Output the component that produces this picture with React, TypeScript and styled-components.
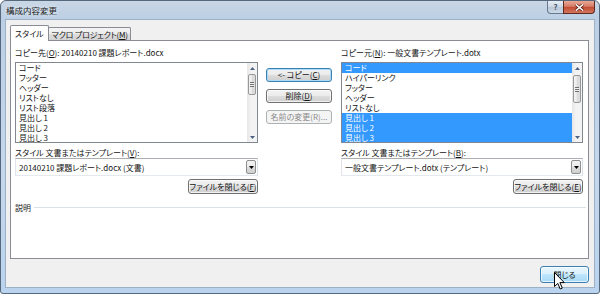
import React from "react";
import styled, { createGlobalStyle, css } from "styled-components";

const GlobalStyle = createGlobalStyle`
  html, body {
    margin: 0;
    padding: 0;
    background: #ffffff;
  }
  #root {
    width: 600px;
    height: 294px;
  }
`;

const Window = styled.div`
  width: 600px;
  height: 294px;
  box-sizing: border-box;
  border: 1px solid #56687c;
  border-radius: 6px 6px 3px 3px;
  background: linear-gradient(
    to bottom,
    #c9d6e5 0px,
    #bccfe4 19px,
    #c4d7ec 60%,
    #bad3ee 100%
  );
  display: flex;
  flex-direction: column;
  overflow: hidden;
  font-family: "Noto Sans CJK JP", "Noto Sans", sans-serif;
  font-feature-settings: "palt";
  font-size: 8px;
  color: #141414;
`;

const TitleBar = styled.div`
  height: 18px;
  display: flex;
  justify-content: space-between;
  align-items: flex-start;
`;

const Title = styled.div`
  padding: 4px 0 0 5px;
  line-height: 10px;
  font-size: 8.5px;
  color: #1a1a1a;
  text-shadow: 0 0 4px rgba(255, 255, 255, 0.9);
`;

const CaptionButtons = styled.div`
  display: flex;
  margin-right: 4px;
`;

const HelpButton = styled.div`
  width: 17px;
  height: 13px;
  box-sizing: border-box;
  border: 1px solid #67798e;
  border-top: none;
  border-radius: 0 0 0 4px;
  background: linear-gradient(
    to bottom,
    #e6edf5 0%,
    #d0dae6 45%,
    #b9c7d7 50%,
    #cbd8e6 100%
  );
  display: flex;
  align-items: center;
  justify-content: center;
  font-size: 8px;
  font-weight: bold;
  color: #4a5a6d;
  line-height: 1;
`;

const CloseButton = styled.div`
  width: 32px;
  height: 13px;
  box-sizing: border-box;
  margin-left: -1px;
  border: 1px solid #5d2a22;
  border-top: none;
  border-radius: 0 0 4px 0;
  background: linear-gradient(
    to bottom,
    #e9a896 0%,
    #d57c66 45%,
    #c24a31 50%,
    #d2765e 100%
  );
  display: flex;
  align-items: center;
  justify-content: center;
`;

const Client = styled.div`
  flex: 1;
  margin: 0 4px 5px 4px;
  border: 1px solid #9db1c6;
  background: #f0f0f0;
  padding: 5px 5px 0 4px;
  display: flex;
  flex-direction: column;
`;

const TabStrip = styled.div`
  display: flex;
  align-items: flex-end;
  height: 15px;
  position: relative;
  z-index: 1;
`;

const Tab = styled.div<{ $active?: boolean }>`
  box-sizing: border-box;
  border: 1px solid #898c95;
  border-bottom: none;
  border-radius: 2px 2px 0 0;
  white-space: nowrap;
  line-height: 11px;
  ${({ $active }) =>
    $active
      ? css`
          height: 16px;
          margin-bottom: -1px;
          padding: 2px 4px 0 4px;
          background: #ffffff;
        `
      : css`
          height: 13px;
          margin-left: -1px;
          padding: 1px 2px 0 3px;
          letter-spacing: -0.2px;
          background: linear-gradient(
            to bottom,
            #f4f4f4 0%,
            #ebebeb 50%,
            #dddddd 51%,
            #d3d3d3 100%
          );
        `}
`;

const Panel = styled.div`
  height: 219px;
  box-sizing: border-box;
  border: 1px solid #898c95;
  background: #ffffff;
  padding: 6px 5px 0 4px;
`;

const Columns = styled.div`
  display: grid;
  grid-template-columns: 243px 67px 242px;
  column-gap: 8px;
`;

const Side = styled.div`
  display: flex;
  flex-direction: column;
`;

const FieldLabel = styled.div<{ $gap?: number }>`
  height: 11px;
  line-height: 11px;
  white-space: nowrap;
  margin-top: ${({ $gap }) => $gap ?? 0}px;
`;

const Key = styled.span`
  text-decoration: underline;
`;

const ListBox = styled.div`
  margin-top: 4px;
  height: 81px;
  box-sizing: border-box;
  border: 1px solid #828790;
  background: #ffffff;
  display: flex;
`;

const ListItems = styled.div`
  flex: 1;
  overflow: hidden;
`;

const ListRow = styled.div<{ $selected?: boolean }>`
  height: 10px;
  line-height: 10px;
  padding-left: 3px;
  white-space: nowrap;
  ${({ $selected }) =>
    $selected &&
    css`
      background: #3399ff;
      color: #ffffff;
    `}
`;

const ScrollBar = styled.div`
  width: 10px;
  display: flex;
  flex-direction: column;
  background: linear-gradient(to right, #e6e6e6, #f3f3f3 40%, #f3f3f3);
`;

const ArrowButton = styled.div`
  height: 10px;
  display: flex;
  align-items: center;
  justify-content: center;
`;

const Track = styled.div`
  flex: 1;
`;

const Thumb = styled.div<{ $offset: number; $size: number }>`
  margin: ${({ $offset }) => $offset}px 1px 0 1px;
  height: ${({ $size }) => $size}px;
  box-sizing: border-box;
  border: 1px solid #979797;
  border-radius: 2px;
  background: linear-gradient(
    to right,
    #f4f4f4 0%,
    #e8e8e8 50%,
    #d9d9d9 51%,
    #dedede 100%
  );
  display: flex;
  align-items: center;
  justify-content: center;
`;

const Grip = styled.div`
  width: 4px;
  height: 5px;
  background: repeating-linear-gradient(
    to bottom,
    #6f6f6f 0px,
    #6f6f6f 1px,
    #f2f2f2 1px,
    #f2f2f2 2px
  );
`;

const Middle = styled.div`
  padding-top: 21px;
  display: flex;
  flex-direction: column;
  gap: 7px;
`;

type ButtonKind = "normal" | "focus" | "disabled" | "hot";

const Button = styled.div<{ $kind?: ButtonKind; $w: number; $h: number }>`
  width: ${({ $w }) => $w}px;
  height: ${({ $h }) => $h}px;
  box-sizing: border-box;
  border: 1px solid #707070;
  border-radius: 3px;
  display: flex;
  align-items: center;
  justify-content: center;
  white-space: nowrap;
  line-height: 1;
  box-shadow: inset 0 0 0 1px rgba(255, 255, 255, 0.7);
  background: linear-gradient(
    to bottom,
    #f2f2f2 0%,
    #ebebeb 49%,
    #dddddd 50%,
    #cfcfcf 100%
  );
  ${({ $kind }) =>
    $kind === "focus" &&
    css`
      border-color: #3c7fb1;
      box-shadow: inset 0 0 0 1px #a9dcf6;
    `}
  ${({ $kind }) =>
    $kind === "disabled" &&
    css`
      border-color: #adb2b5;
      background: #f4f4f4;
      color: #8a8a8a;
      box-shadow: none;
    `}
  ${({ $kind }) =>
    $kind === "hot" &&
    css`
      border-color: #3c7fb1;
      background: linear-gradient(
        to bottom,
        #eaf6fd 0%,
        #d9f0fc 49%,
        #bee6fd 50%,
        #a7d9f5 100%
      );
    `}
`;

const ComboBox = styled.div`
  height: 18px;
  box-sizing: border-box;
  border: 1px solid #abadb3;
  border-color: #abadb3 #dbdfe6 #e3e9ef #e2e3ea;
  background: #ffffff;
  display: flex;
  align-items: center;
  padding-left: 3px;
`;

const ComboText = styled.div`
  flex: 1;
  white-space: nowrap;
  overflow: hidden;
`;

const DropButton = styled.div`
  width: 10px;
  height: 14px;
  margin-right: 1px;
  box-sizing: border-box;
  border: 1px solid #8e8f8f;
  border-radius: 2px;
  background: linear-gradient(
    to bottom,
    #f2f2f2 0%,
    #ebebeb 49%,
    #dddddd 50%,
    #cfcfcf 100%
  );
  display: flex;
  align-items: center;
  justify-content: center;
`;

const ButtonRow = styled.div`
  margin-top: 3px;
  display: flex;
  justify-content: flex-end;
`;

const Description = styled.div`
  margin-top: 8px;
  display: flex;
  align-items: center;
  gap: 3px;
  line-height: 11px;
`;

const Rule = styled.div`
  flex: 1;
  height: 1px;
  margin-right: -3px;
  background: #d9e1e8;
`;

const Footer = styled.div`
  padding-top: 7px;
  display: flex;
  justify-content: flex-end;
`;

const Hover = styled.div`
  position: relative;
`;

const Pointer = styled.svg`
  position: absolute;
  left: 14px;
  top: 6px;
`;

const UpArrow = () => (
  <svg width="5" height="3" viewBox="0 0 5 3">
    <path d="M0 3 L2.5 0 L5 3 Z" fill="#4d6185" />
  </svg>
);

const DownArrow = ({ color = "#4d6185" }: { color?: string }) => (
  <svg width="5" height="3" viewBox="0 0 5 3">
    <path d="M0 0 L5 0 L2.5 3 Z" fill={color} />
  </svg>
);

const VScroll = ({ offset, size }: { offset: number; size: number }) => (
  <ScrollBar>
    <ArrowButton>
      <UpArrow />
    </ArrowButton>
    <Track>
      <Thumb $offset={offset} $size={size}>
        <Grip />
      </Thumb>
    </Track>
    <ArrowButton>
      <DownArrow />
    </ArrowButton>
  </ScrollBar>
);

type Item = { name: string; selected?: boolean };

const targetItems: Item[] = [
  { name: "コード" },
  { name: "フッター" },
  { name: "ヘッダー" },
  { name: "リストなし" },
  { name: "リスト段落" },
  { name: "見出し 1" },
  { name: "見出し 2" },
  { name: "見出し 3" },
];

const sourceItems: Item[] = [
  { name: "コード", selected: true },
  { name: "ハイパーリンク" },
  { name: "フッター" },
  { name: "ヘッダー" },
  { name: "リストなし" },
  { name: "見出し 1", selected: true },
  { name: "見出し 2", selected: true },
  { name: "見出し 3", selected: true },
];

const StyleList = ({
  items,
  thumb,
}: {
  items: Item[];
  thumb: [number, number];
}) => (
  <ListBox>
    <ListItems>
      {items.map((it, i) => (
        <ListRow key={i} $selected={it.selected}>
          {it.name}
        </ListRow>
      ))}
    </ListItems>
    <VScroll offset={thumb[0]} size={thumb[1]} />
  </ListBox>
);

const Combo = ({ value }: { value: string }) => (
  <ComboBox>
    <ComboText>{value}</ComboText>
    <DropButton>
      <DownArrow color="#000000" />
    </DropButton>
  </ComboBox>
);

export default function App() {
  return (
    <>
      <GlobalStyle />
      <Window>
        <TitleBar>
          <Title>構成内容変更</Title>
          <CaptionButtons>
            <HelpButton>?</HelpButton>
            <CloseButton>
              <svg width="9" height="7" viewBox="0 0 9 7">
                <path
                  d="M1 0.5 L8 6.5 M8 0.5 L1 6.5"
                  stroke="#5a1f16"
                  strokeWidth="3"
                />
                <path
                  d="M1 0.5 L8 6.5 M8 0.5 L1 6.5"
                  stroke="#ffffff"
                  strokeWidth="1.6"
                />
              </svg>
            </CloseButton>
          </CaptionButtons>
        </TitleBar>

        <Client>
          <TabStrip>
            <Tab $active>スタイル</Tab>
            <Tab>
              マクロ プロジェクト(<Key>M</Key>)
            </Tab>
          </TabStrip>

          <Panel>
            <Columns>
              <Side>
                <FieldLabel>
                  コピー先(<Key>O</Key>): 20140210 課題レポート.docx
                </FieldLabel>
                <StyleList items={targetItems} thumb={[1, 21]} />
                <FieldLabel $gap={4}>
                  スタイル 文書またはテンプレート(<Key>V</Key>):
                </FieldLabel>
                <Combo value="20140210 課題レポート.docx (文書)" />
                <ButtonRow>
                  <Button $w={70} $h={15}>
                    ファイルを閉じる(<Key>F</Key>)
                  </Button>
                </ButtonRow>
              </Side>

              <Middle>
                <Button $kind="focus" $w={66} $h={14}>
                  &lt;- コピー(<Key>C</Key>)
                </Button>
                <Button $w={66} $h={14}>
                  削除(<Key>D</Key>)
                </Button>
                <Button $kind="disabled" $w={66} $h={14}>
                  名前の変更(R)...
                </Button>
              </Middle>

              <Side>
                <FieldLabel>
                  コピー元(<Key>N</Key>): 一般文書テンプレート.dotx
                </FieldLabel>
                <StyleList items={sourceItems} thumb={[2, 28]} />
                <FieldLabel $gap={4}>
                  スタイル 文書またはテンプレート(<Key>B</Key>):
                </FieldLabel>
                <Combo value="一般文書テンプレート.dotx (テンプレート)" />
                <ButtonRow>
                  <Button $w={70} $h={15}>
                    ファイルを閉じる(<Key>E</Key>)
                  </Button>
                </ButtonRow>
              </Side>
            </Columns>

            <Description>
              <span>説明</span>
              <Rule />
            </Description>
          </Panel>

          <Footer>
            <Hover>
              <Button $kind="hot" $w={49} $h={17}>
                閉じる
              </Button>
              <Pointer width="11" height="18" viewBox="0 0 11 18">
                <path
                  d="M0.5 0.5 L0.5 14.5 L3.8 11.4 L6.2 17 L8.3 16.1 L5.9 10.6 L10.3 10.6 Z"
                  fill="#ffffff"
                  stroke="#000000"
                  strokeWidth="1"
                  strokeLinejoin="round"
                />
              </Pointer>
            </Hover>
          </Footer>
        </Client>
      </Window>
    </>
  );
}
